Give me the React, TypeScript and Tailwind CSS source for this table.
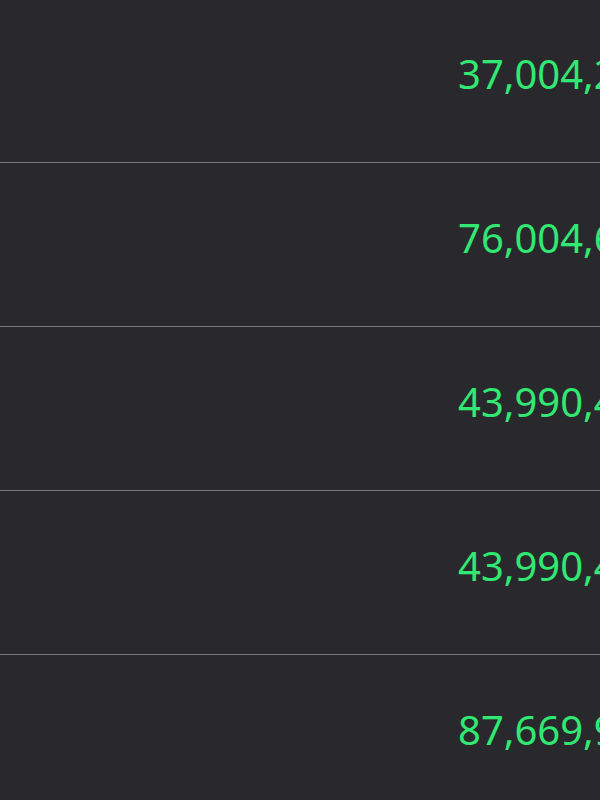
const rows = ["37,004,281.55", "76,004,612.30", "43,990,417.08", "43,990,417.08", "87,669,903.14"];

export default function App() {
  return (
    <div className="h-[800px] w-[600px] overflow-hidden bg-[#28282d] font-['Noto_Sans',sans-serif]">
      <div className="-mt-[1px] flex flex-col">
        {rows.map((value, i) => (
          <div key={i} className="flex h-[164px] items-center border-b border-[#7a7a7f]">
            <div className="flex-1" />
            <div className="w-[142px] overflow-hidden whitespace-nowrap pb-[14px] text-[40px] leading-none text-[#31e872]">
              {value}
            </div>
          </div>
        ))}
      </div>
    </div>
  );
}
